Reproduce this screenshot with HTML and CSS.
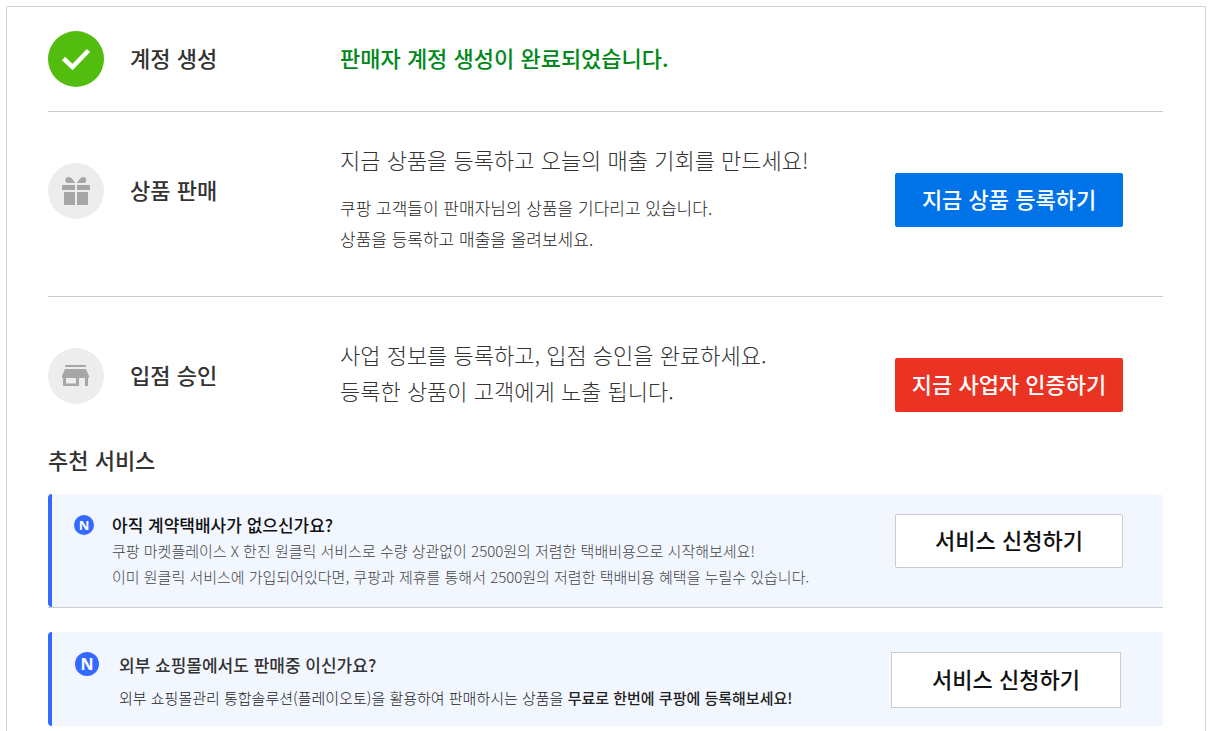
FILE: index.html
```html
<!DOCTYPE html>
<html lang="ko">
<head>
<meta charset="UTF-8" />
<meta name="viewport" content="width=device-width, initial-scale=1" />
<title>판매자 시작하기</title>
<link rel="stylesheet" href="styles.css">
</head>
<body>
<main class="panel">
  <section class="step step-done">
    <svg class="step-icon" viewBox="0 0 56 56" aria-hidden="true">
      <circle cx="28" cy="28" r="28" fill="#52bd0f" />
      <path d="M15.500 27.500L24.500 36L40.500 19.500" fill="none" stroke="#fff" stroke-width="4.500" />
    </svg>
    <h2 class="step-name">계정 생성</h2>
    <p class="step-message">판매자 계정 생성이 완료되었습니다.</p>
  </section>

  <section class="step">
    <svg class="step-icon" viewBox="0 0 56 56" aria-hidden="true">
      <circle cx="28" cy="28" r="28" fill="#ededed" />
      <g fill="#a6a6a6">
        <path d="M27 20C25.500 17 23 14 20.500 14C18.500 14 17.300 15.500 17.300 17.200C17.300 18.800 18.500 20 20 20Z" />
        <path d="M29 20C30.500 17 33 14 35.500 14C37.300 14 38.300 15.500 38.300 17.200C38.300 18.800 37.300 20 36 20Z" />
        <path d="M15 22H27V27H14V23Q14 22 15 22ZM29 22H41Q42 22 42 23V27H29Z" />
        <path d="M16 29H27V42H17Q16 42 16 41ZM29 29H40V41Q40 42 39 42H29Z" />
      </g>
    </svg>
    <h2 class="step-name">상품 판매</h2>
    <div class="step-text">
      <p class="lead">지금 상품을 등록하고 오늘의 매출 기회를 만드세요!</p>
      <p class="detail">쿠팡 고객들이 판매자님의 상품을 기다리고 있습니다.<br>상품을 등록하고 매출을 올려보세요.</p>
    </div>
    <button type="button" class="btn btn-blue">지금 상품 등록하기</button>
  </section>

  <section class="step step-last">
    <svg class="step-icon" viewBox="0 0 56 56" aria-hidden="true">
      <circle cx="28" cy="28" r="28" fill="#ededed" />
      <g fill="#a6a6a6">
        <rect x="17" y="17" width="21" height="2" rx="1" />
        <path d="M17 21H38L41 28V30H40V38H37V30H31V38H15V30H14V28ZM18 30V35.500H28V30Z" fill-rule="evenodd" />
      </g>
    </svg>
    <h2 class="step-name">입점 승인</h2>
    <div class="step-text">
      <p class="lead">사업 정보를 등록하고, 입점 승인을 완료하세요.<br>등록한 상품이 고객에게 노출 됩니다.</p>
    </div>
    <button type="button" class="btn btn-red">지금 사업자 인증하기</button>
  </section>

  <h2 class="services-title">추천 서비스</h2>

  <div class="service-wrap">
    <section class="service">
      <span class="badge">N</span>
      <div class="service-text">
        <h3>아직 계약택배사가 없으신가요?</h3>
        <p>쿠팡 마켓플레이스 X 한진 원클릭 서비스로 수량 상관없이 2500원의 저렴한 택배비용으로 시작해보세요!<br>이미 원클릭 서비스에 가입되어있다면, 쿠팡과 제휴를 통해서 2500원의 저렴한 택배비용 혜택을 누릴수 있습니다.</p>
      </div>
      <button type="button" class="btn btn-white">서비스 신청하기</button>
    </section>
  </div>

  <section class="service service-mall">
    <span class="badge">N</span>
    <div class="service-text">
      <h3>외부 쇼핑몰에서도 판매중 이신가요?</h3>
      <p>외부 쇼핑몰관리 통합솔루션(플레이오토)을 활용하여 판매하시는 상품을 <strong>무료로 한번에 쿠팡에 등록해보세요!</strong></p>
    </div>
    <button type="button" class="btn btn-white">서비스 신청하기</button>
  </section>
</main>
</body>
</html>
```
FILE: styles.css
```css
* {
  box-sizing: border-box;
}
body {
  margin: 6px 4px 0 6px;
  background: #fff;
  color: #333;
  font-family: "Noto Sans CJK KR", sans-serif;
  font-weight: 300;
}
h2, h3, p {
  margin: 0;
}
.panel {
  min-height: calc(100vh - 6px);
  padding: 0 42px 0 41px;
  border: 1px solid #d3d3d3;
  border-bottom: none;
  border-radius: 2px 2px 0 0;
}

/* steps */
.step {
  display: grid;
  grid-template-columns: 82px 210px 1fr 228px;
  align-items: start;
  padding: 29px 40px 42px 0;
  border-bottom: 1px solid #ccc;
}
.step-icon {
  width: 56px;
  height: 56px;
  margin-top: 22px;
}
.step-name {
  margin-top: 22px;
  font-size: 22px;
  font-weight: 500;
  line-height: 52px;
}
.step .btn {
  margin-top: 32px;
}
.step-done {
  padding: 24px 40px 24px 0;
}
.step-done .step-icon,
.step-done .step-name {
  margin-top: 0;
}
.step-message {
  color: #00891a;
  font-size: 22px;
  font-weight: 500;
  line-height: 52px;
}
.step-last {
  padding-bottom: 0;
  border-bottom: none;
}
.step-last .step-text {
  margin-top: 10px;
}
.lead {
  font-size: 22px;
  line-height: 36px;
}
.detail {
  margin-top: 15px;
  color: #222;
  font-size: 17px;
  line-height: 31px;
}

/* buttons */
.btn {
  width: 228px;
  height: 54px;
  padding: 0 0 4px;
  border: none;
  border-radius: 2px;
  color: #fff;
  font-family: inherit;
  font-size: 22px;
  font-weight: 500;
  cursor: pointer;
}
.btn-blue {
  background: #0073e9;
}
.btn-red {
  background: #ea3323;
}
.btn-white {
  background: #fff;
  border: 1px solid #ccc;
  color: #111;
}

/* recommended services */
.services-title {
  margin: 32px 0 20px;
  font-size: 22px;
  font-weight: 500;
  line-height: 30px;
}
.service-wrap {
  margin-bottom: 24px;
  border-bottom: 1px solid #ccc;
}
.service {
  display: flex;
  align-items: flex-start;
  padding: 18px 40px 17px 22px;
  border-left: 4px solid #346aff;
  border-radius: 4px;
  background: #f1f6ff;
}
.badge {
  flex: none;
  width: 20px;
  margin: 3px 18px 0 0;
  border-radius: 50%;
  background: #346aff;
  color: #fff;
  font-family: "Open Sans", sans-serif;
  font-size: 13px;
  font-weight: 700;
  line-height: 20px;
  text-align: center;
}
.service-text {
  flex: 1;
}
.service-text h3 {
  color: #111;
  font-size: 17px;
  font-weight: 500;
  line-height: 26px;
}
.service-text p {
  color: #444;
  font-size: 15px;
  line-height: 26px;
}
.service .btn {
  flex: none;
  margin-top: 2px;
}
.service-mall {
  padding: 20px 42px 15px 23px;
  border-radius: 4px 0 0 4px;
}
.service-mall .badge {
  width: 24px;
  margin: 0 20px 0 0;
  font-size: 16px;
  line-height: 24px;
}
.service-mall h3 {
  color: #333;
}
.service-mall p {
  margin-top: 7px;
  color: #222;
}
.service-mall strong {
  font-weight: 500;
}
.service-mall .btn {
  width: 230px;
  height: 56px;
  margin-top: 0;
  border-radius: 0;
}
```
